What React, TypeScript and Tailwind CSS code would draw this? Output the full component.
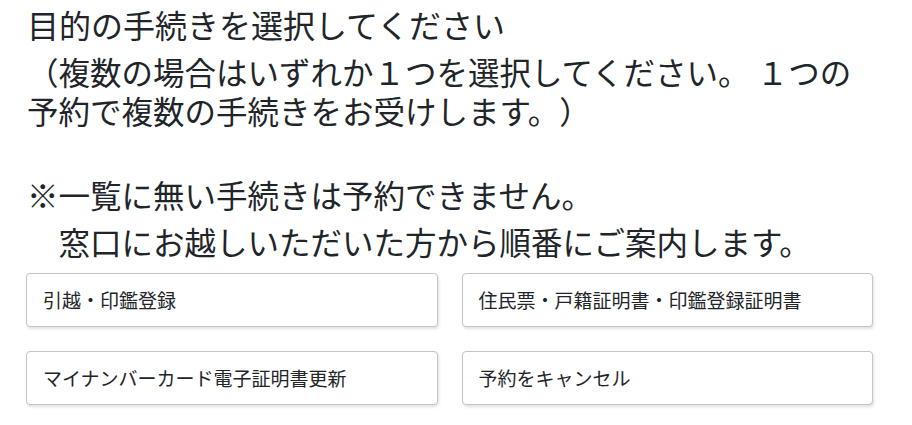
const procedures = [
  "引越・印鑑登録",
  "住民票・戸籍証明書・印鑑登録証明書",
  "マイナンバーカード電子証明書更新",
  "予約をキャンセル",
];

const App = () => {
  return (
    <div
      className="w-[912px] h-[425px] bg-white text-[#212529] overflow-hidden [text-spacing-trim:space-all]"
      style={{ fontFamily: '"Noto Sans CJK JP", "Noto Sans", sans-serif' }}
    >
      <div className="pl-[26px] w-[873px]">
        {/* Heading */}
        <div className="pl-[1px] pt-[1px] whitespace-nowrap">
          <h1 className="text-[32px] leading-[47px] font-normal">
            目的の手続きを選択してください
          </h1>
          <p className="mt-[4px] text-[31.5px] leading-[39px]">
            （複数の場合はいずれか１つを選択してください。 １つの
            <br />
            予約で複数の手続きをお受けします。）
          </p>
          <p className="mt-[41px] text-[31.5px] leading-[47px]">
            ※一覧に無い手続きは予約できません。
            <br />
            {"\u3000"}窓口にお越しいただいた方から順番にご案内します。
          </p>
        </div>

        {/* Procedure buttons */}
        <div className="mt-[8px] grid grid-cols-2 gap-6 w-[847px]">
          {procedures.map((label) => (
            <button
              key={label}
              className="h-[54px] flex items-center px-4 text-left text-[19px] text-[#212529] bg-white border border-[#c4c4c4] rounded-[4px] shadow-[1px_2px_3px_rgba(0,0,0,0.12)]"
            >
              {label}
            </button>
          ))}
        </div>
      </div>
    </div>
  );
};

export default App;
